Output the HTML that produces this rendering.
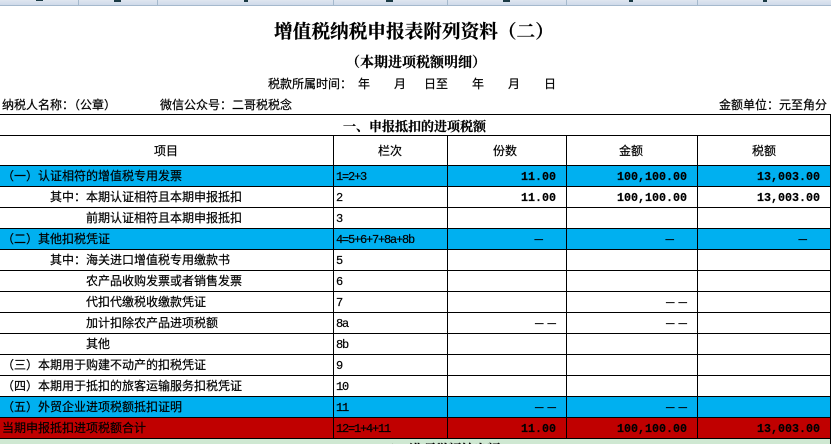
<!DOCTYPE html>
<html lang="zh">
<head>
<meta charset="utf-8">
<title>增值税纳税申报表附列资料(二)</title>
<style>
html,body{margin:0;padding:0;background:#fff}
#p{position:relative;width:831px;height:444px;overflow:hidden;background:#fff;color:#000;font-family:"Liberation Sans","WenQuanYi Zen Hei","Noto Sans CJK SC",sans-serif;font-size:12px;-webkit-text-stroke:0.2px #000}
#p div{position:absolute}
.t{white-space:nowrap;line-height:14px;height:14px}
.h{height:1px;left:0;width:831px;background:#000}
.v{width:1px;background:#000}
.f{left:0;width:830px;height:20px}
.n{white-space:nowrap;font-family:"Liberation Mono",monospace;font-weight:bold;font-size:11.67px;line-height:14px;text-align:right;width:110px}
.c{white-space:nowrap;font-family:"Liberation Mono",monospace;font-size:12px;letter-spacing:-1.2px;line-height:14px;left:336px}
.d{white-space:nowrap;font-family:"Liberation Sans",sans-serif;font-weight:bold;font-size:8.5px;line-height:10px;letter-spacing:4px;text-align:right;width:60px;color:#000}
.b{height:1px;background:#1a3a44}
.hc{text-align:center;width:60px}
</style>
</head>
<body>
<div id="p">
<!-- top strip -->
<div style="left:0;top:0;width:831px;height:5px;background:linear-gradient(#dfe6f0,#cfdaea)"></div>
<div style="left:0;top:5px;width:831px;height:1px;background:#a5b9cd"></div>
<div style="left:78px;top:0;width:1px;height:5px;background:#a5b9cd"></div>
<div style="left:157px;top:0;width:1px;height:5px;background:#a5b9cd"></div>
<div style="left:333px;top:0;width:1px;height:5px;background:#a5b9cd"></div>
<div style="left:447px;top:0;width:1px;height:5px;background:#a5b9cd"></div>
<div style="left:566px;top:0;width:1px;height:5px;background:#a5b9cd"></div>
<div style="left:697px;top:0;width:1px;height:5px;background:#a5b9cd"></div>
<div class="b" style="left:36px;top:0;width:7px;height:1px"></div>
<div class="b" style="left:114px;top:0;width:7px;height:2px"></div>
<div class="b" style="left:244px;top:0;width:4px;height:2px"></div>
<div class="b" style="left:386px;top:0;width:7px;height:2px"></div>
<div class="b" style="left:503px;top:0;width:7px;height:2px"></div>
<div class="b" style="left:629px;top:0;width:4px;height:2px"></div>
<div class="b" style="left:763px;top:0;width:4px;height:2px"></div>

<!-- titles -->
<div class="t" style="left:274px;top:19px;height:24px;line-height:24px;font-family:'Noto Serif CJK SC',serif;font-weight:bold;font-size:18.67px">增值税纳税申报表附列资料（二）</div>
<div class="t" style="left:346px;top:54px;height:16px;line-height:16px;font-family:'Noto Serif CJK SC',serif;font-weight:bold;font-size:14px">（本期进项税额明细）</div>
<div class="t" style="left:268px;top:77px">税款所属时间：</div>
<div class="t" style="left:358px;top:77px">年</div>
<div class="t" style="left:394px;top:77px">月</div>
<div class="t" style="left:424px;top:77px">日至</div>
<div class="t" style="left:472px;top:77px">年</div>
<div class="t" style="left:508px;top:77px">月</div>
<div class="t" style="left:544px;top:77px">日</div>
<div class="t" style="left:2px;top:98px">纳税人名称：（公章）</div>
<div class="t" style="left:160px;top:98px">微信公众号：二哥税税念</div>
<div class="t" style="left:719px;top:98px">金额单位：元至角分</div>
<div class="t" style="left:343px;top:119px;font-family:'Noto Serif CJK SC',serif;font-weight:bold;font-size:13px">一、申报抵扣的进项税额</div>

<!-- fills -->
<div class="f" style="top:166px;background:#00b0f0"></div>
<div class="f" style="top:229px;background:#00b0f0"></div>
<div class="f" style="top:397px;background:#00b0f0"></div>
<div class="f" style="top:418px;background:#c00000"></div>
<div class="f" style="top:439px;height:5px;background:#cfe8d2"></div>

<!-- lines -->
<div class="h" style="top:114px"></div>
<div class="h" style="top:135px"></div>
<div class="h" style="top:165px"></div>
<div class="h" style="top:186px"></div>
<div class="h" style="top:207px"></div>
<div class="h" style="top:228px"></div>
<div class="h" style="top:249px"></div>
<div class="h" style="top:270px"></div>
<div class="h" style="top:291px"></div>
<div class="h" style="top:312px"></div>
<div class="h" style="top:333px"></div>
<div class="h" style="top:354px"></div>
<div class="h" style="top:375px"></div>
<div class="h" style="top:396px"></div>
<div class="h" style="top:417px"></div>
<div class="h" style="top:438px"></div>
<div class="v" style="left:333px;top:135px;height:303px"></div>
<div class="v" style="left:447px;top:135px;height:303px"></div>
<div class="v" style="left:566px;top:135px;height:303px"></div>
<div class="v" style="left:697px;top:135px;height:303px"></div>
<div class="v" style="left:830px;top:114px;height:330px"></div>

<!-- header -->
<div class="t hc" style="left:136px;top:144px">项目</div>
<div class="t hc" style="left:360px;top:144px">栏次</div>
<div class="t hc" style="left:475px;top:144px">份数</div>
<div class="t hc" style="left:601px;top:144px">金额</div>
<div class="t hc" style="left:734px;top:144px">税额</div>

<!-- labels -->
<div class="t" style="left:2px;top:169px">（一）认证相符的增值税专用发票</div>
<div class="t" style="left:50px;top:190px">其中：本期认证相符且本期申报抵扣</div>
<div class="t" style="left:86px;top:211px">前期认证相符且本期申报抵扣</div>
<div class="t" style="left:2px;top:232px">（二）其他扣税凭证</div>
<div class="t" style="left:50px;top:253px">其中：海关进口增值税专用缴款书</div>
<div class="t" style="left:86px;top:274px">农产品收购发票或者销售发票</div>
<div class="t" style="left:86px;top:295px">代扣代缴税收缴款凭证</div>
<div class="t" style="left:86px;top:316px">加计扣除农产品进项税额</div>
<div class="t" style="left:86px;top:337px">其他</div>
<div class="t" style="left:2px;top:358px">（三）本期用于购建不动产的扣税凭证</div>
<div class="t" style="left:2px;top:379px">（四）本期用于抵扣的旅客运输服务扣税凭证</div>
<div class="t" style="left:2px;top:400px">（五）外贸企业进项税额抵扣证明</div>
<div class="t" style="left:2px;top:421px">当期申报抵扣进项税额合计</div>

<!-- column codes -->
<div class="c" style="top:170px">1=2+3</div>
<div class="c" style="top:191px">2</div>
<div class="c" style="top:212px">3</div>
<div class="c" style="top:233px">4=5+6+7+8a+8b</div>
<div class="c" style="top:254px">5</div>
<div class="c" style="top:275px">6</div>
<div class="c" style="top:296px">7</div>
<div class="c" style="top:317px">8a</div>
<div class="c" style="top:338px">8b</div>
<div class="c" style="top:359px">9</div>
<div class="c" style="top:380px">10</div>
<div class="c" style="top:401px">11</div>
<div class="c" style="top:422px">12=1+4+11</div>

<!-- numbers -->
<div class="n" style="left:446px;top:170px">11.00</div>
<div class="n" style="left:577px;top:170px">100,100.00</div>
<div class="n" style="left:710px;top:170px">13,003.00</div>
<div class="n" style="left:446px;top:191px">11.00</div>
<div class="n" style="left:577px;top:191px">100,100.00</div>
<div class="n" style="left:710px;top:191px">13,003.00</div>
<div class="n" style="left:446px;top:422px">11.00</div>
<div class="n" style="left:577px;top:422px">100,100.00</div>
<div class="n" style="left:710px;top:422px">13,003.00</div>

<!-- dashes -->
<div class="d" style="left:487px;top:234px">—</div>
<div class="d" style="left:618px;top:234px">—</div>
<div class="d" style="left:751px;top:234px">—</div>
<div class="d" style="left:631px;top:297px">——</div>
<div class="d" style="left:500px;top:318px">——</div>
<div class="d" style="left:631px;top:318px">——</div>
<div class="d" style="left:500px;top:402px">——</div>
<div class="d" style="left:631px;top:402px">——</div>

<!-- clipped next section heading -->
<div class="t" style="left:383px;top:442px;font-family:'Noto Serif CJK SC',serif;font-weight:bold;font-size:13px">二、进项税额转出额</div>
</div>
</body>
</html>
